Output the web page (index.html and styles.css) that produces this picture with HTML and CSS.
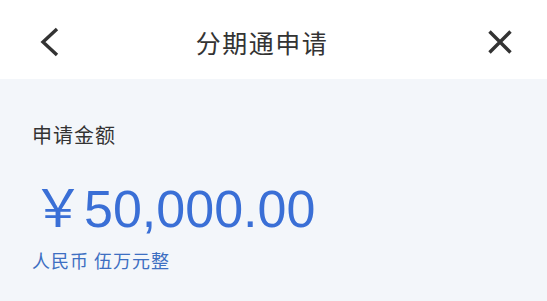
FILE: index.html
```html
<!DOCTYPE html>
<html lang="zh-CN">
<head>
    <meta charset="UTF-8">
    <meta name="viewport" content="width=device-width, initial-scale=1.0">
    <title>分期通申请</title>
    <link rel="stylesheet" href="styles.css">
</head>
<body>
    <header class="nav">
        <a class="nav-back" href="#">
            <svg width="20" height="30" viewBox="0 0 20 30">
                <polyline points="17,2 3,15 17,28" fill="none" stroke="#333" stroke-width="3.4"/>
            </svg>
        </a>
        <div class="nav-title">分期通申请</div>
        <a class="nav-close" href="#">
            <svg width="24" height="24" viewBox="0 0 24 24">
                <path d="M1.5 1.5 L22.5 22.5 M22.5 1.5 L1.5 22.5" fill="none" stroke="#333" stroke-width="3.4"/>
            </svg>
        </a>
    </header>

    <main class="apply">
        <div class="label">申请金额</div>
        <div class="amount"><span class="currency">￥</span>50,000.00</div>
        <div class="amount-words">人民币&nbsp;伍万元整</div>
    </main>
</body>
</html>
```

FILE: styles.css
```css
* {
    box-sizing: border-box;
}

body {
    margin: 0;
    font-family: "Noto Sans CJK SC", "Liberation Sans", sans-serif;
    background: #f3f6fa;
    color: #333;
    min-height: 100vh;
}

.nav {
    height: 79px;
    padding-top: 4px;
    background: #fff;
    display: flex;
    align-items: center;
}

.nav-back {
    display: flex;
    padding: 0 20px 0 40px;
}

.nav-title {
    flex: 1;
    text-align: center;
    font-size: 25px;
    letter-spacing: 1.5px;
    color: #333;
}

.nav-close {
    display: flex;
    padding: 0 35px 0 44px;
}

.apply {
    padding: 42px 32px 0;
}

.label {
    font-size: 20px;
    line-height: 28px;
    letter-spacing: 1px;
    color: #333;
}

.amount {
    margin-top: 25px;
    font-family: "Liberation Sans", "Noto Sans CJK SC", sans-serif;
    font-size: 52px;
    line-height: 62px;
    color: #3a6fd6;
}

.currency {
    font-family: "Noto Sans CJK SC", sans-serif;
}

.amount-words {
    margin-top: 7px;
    font-size: 18px;
    line-height: 26px;
    letter-spacing: 1px;
    color: #3d6fc2;
}
```
